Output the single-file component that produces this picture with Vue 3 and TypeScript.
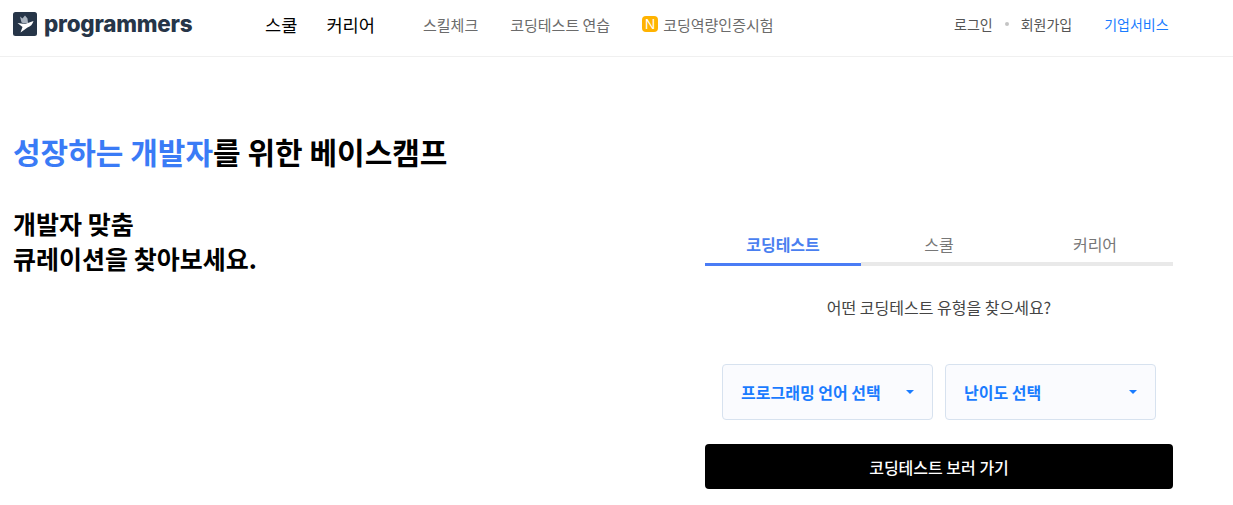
<script setup lang="ts">
const mainNav: string[] = ['스쿨', '커리어']
const tabs: string[] = ['코딩테스트', '스쿨', '커리어']
const selects: string[] = ['프로그래밍 언어 선택', '난이도 선택']
</script>

<template>
  <div class="page">
    <header class="header">
      <a class="logo">
        <svg width="24" height="24" viewBox="0 0 24 24" aria-hidden="true">
          <rect width="24" height="24" rx="2.5" fill="#263548" />
          <path d="M7 4.5 9.5 6.5 12 3.5 14.5 6.5 15 11 11 11.5 8.5 10.5Z" fill="#a9b3bf" />
          <path d="M4.5 11 12 12 20.5 9C19.5 12.5 17.5 14.5 14.5 15.5L7.5 20.5 9.5 15Z" fill="#fff" />
        </svg>
        <span class="wordmark">programmers</span>
      </a>
      <nav class="nav-main">
        <a v-for="item in mainNav" :key="item">{{ item }}</a>
      </nav>
      <nav class="nav-sub">
        <a>스킬체크</a>
        <a>코딩테스트 연습</a>
        <a class="cert"><span class="badge">N</span>코딩역량인증시험</a>
      </nav>
      <div class="nav-right">
        <a>로그인</a>
        <i class="dot"></i>
        <a>회원가입</a>
        <a class="biz">기업서비스</a>
      </div>
    </header>

    <main class="hero">
      <h1 class="title"><span class="accent">성장하는 개발자</span>를 위한 베이스캠프</h1>
      <div class="columns">
        <h2 class="subtitle">개발자 맞춤<br />큐레이션을 찾아보세요.</h2>
        <section class="panel">
          <div class="tabs">
            <button v-for="(tab, i) in tabs" :key="tab" class="tab" :class="{ active: i === 0 }">{{ tab }}</button>
          </div>
          <p class="question">어떤 코딩테스트 유형을 찾으세요?</p>
          <div class="selects">
            <div v-for="s in selects" :key="s" class="select">
              <span>{{ s }}</span>
              <i class="caret"></i>
            </div>
          </div>
          <button class="go">코딩테스트 보러 가기</button>
        </section>
      </div>
    </main>
  </div>
</template>

<style>
html, body { margin: 0; background: #fff; }
</style>

<style scoped>
.page {
  width: 1233px;
  height: 505px;
  overflow: hidden;
  font-family: "Noto Sans CJK KR", "Noto Sans", sans-serif;
  color: #000;
}
.header {
  display: flex;
  align-items: center;
  height: 56px;
  border-bottom: 1px solid #f0f0f0;
  padding: 0 0 0 13px;
  box-sizing: content-box;
}
.logo { display: flex; align-items: center; gap: 7px; width: 252px; margin-top: -8px; }
.wordmark {
  font-family: "Inter", sans-serif;
  font-weight: 800;
  font-size: 22.4px;
  letter-spacing: -0.2px;
  color: #263548;
  line-height: 24px;
}
.nav-main { display: flex; gap: 29px; width: 158px; font-size: 17.6px; font-weight: 400; margin-top: -8px; }
.nav-sub { display: flex; gap: 32px; font-size: 15px; color: #6b6b6b; width: 531px; margin-top: -8px; }
.cert { display: flex; align-items: center; }
.badge {
  width: 16px;
  height: 16px;
  border-radius: 4px;
  background: #ffb300;
  color: #fff;
  font-family: "Noto Sans", sans-serif;
  font-size: 14px;
  font-weight: 400;
  line-height: 16px;
  text-align: center;
  margin-right: 5px;
}
.nav-right { display: flex; align-items: center; font-size: 14px; color: #555; margin-top: -8px; }
.dot { width: 4px; height: 4px; border-radius: 50%; background: #c4c4c4; margin: 0 12px; }
.biz { color: #1a7cff; margin-left: 32px; }
.hero { padding: 71px 60px 0 13px; }
.title { margin: 0; font-size: 30px; line-height: 46px; font-weight: 700; }
.accent { color: #3a7bf6; }
.columns { display: flex; justify-content: space-between; margin-top: 32px; }
.subtitle { margin: 0; font-size: 25px; line-height: 35px; font-weight: 700; }
.panel { width: 468px; margin-top: 24px; }
.tabs { display: grid; grid-template-columns: repeat(3, 1fr); }
.tab {
  padding: 1px 0 6px;
  border: 0;
  border-bottom: 4px solid #e9e9e9;
  background: none;
  font: inherit;
  font-size: 16px;
  color: #777;
  box-sizing: content-box;
  height: 25px;
}
.tab.active { color: #4a7ff0; font-weight: 700; border-bottom: 3px solid #4a7cf5; padding-bottom: 7px; }
.question { margin: 30px 0 0; text-align: center; font-size: 16px; line-height: 22px; color: #444; }
.selects { display: flex; gap: 12px; padding: 0 17px; margin-top: 46px; }
.select {
  flex: 1;
  height: 54px;
  border: 1px solid #d7e2ef;
  border-radius: 4px;
  background: #fafbfe;
  display: flex;
  align-items: center;
  justify-content: space-between;
  padding: 0 18px;
  font-size: 16px;
  font-weight: 700;
  color: #1a7cff;
}
.caret {
  width: 0;
  height: 0;
  border-left: 4px solid transparent;
  border-right: 4px solid transparent;
  border-top: 4px solid #1a7cff;
}
.go {
  display: block;
  width: 100%;
  height: 45px;
  margin-top: 24px;
  border: 0;
  border-radius: 4px;
  background: #000;
  color: #fff;
  font: inherit;
  font-size: 16px;
  font-weight: 500;
}
</style>
